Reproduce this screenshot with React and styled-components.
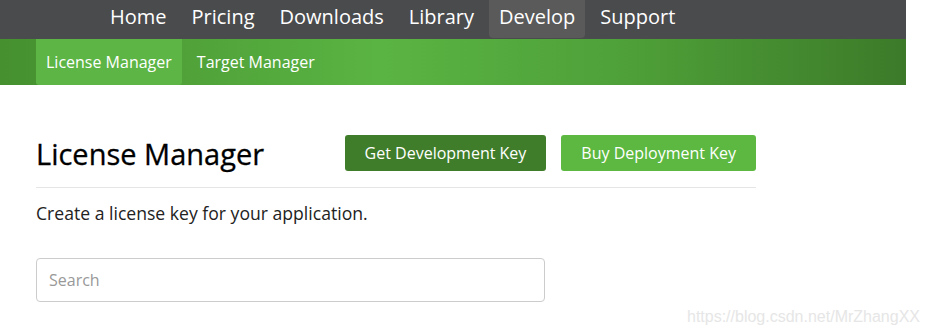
import React from "react";
import styled, { createGlobalStyle } from "styled-components";

const Global = createGlobalStyle`
  html, body { margin: 0; padding: 0; background: #fff; }
  body { font-family: "Open Sans", "Noto Sans", sans-serif; color: #111; }
  * { box-sizing: border-box; }
`;

const Page = styled.div`
  width: 930px;
  height: 332px;
  position: relative;
  overflow: hidden;
`;

const TopBar = styled.nav`
  width: 906px;
  height: 39px;
  background: #4a4b4d;
  display: flex;
  align-items: stretch;
  gap: 5px;
  padding-left: 100px;
`;

const TopItem = styled.a`
  display: flex;
  align-items: center;
  padding: 0 10px 6px;
  height: 38px;
  font-size: 20px;
  color: #fff;
  text-decoration: none;
  border-radius: 0 0 4px 4px;
  background: ${(p) => (p.$active ? "#5a5a5a" : "transparent")};
`;

const SubBar = styled.nav`
  width: 906px;
  height: 46px;
  background: linear-gradient(to right, #46902f 0%, #5ab443 42%, #4e9f38 70%, #3c7a29 100%);
  display: flex;
  align-items: stretch;
  gap: 5px;
  padding-left: 36px;
`;

const SubItem = styled.a`
  display: flex;
  align-items: center;
  padding: 0 10px 0;
  font-size: 16px;
  color: #fff;
  text-decoration: none;
  border-radius: 0 0 3px 3px;
  background: ${(p) => (p.$active ? "#5cb544" : "transparent")};
`;

const Content = styled.main`
  width: 720px;
  margin-left: 36px;
  padding-top: 48px;
`;

const HeaderRow = styled.div`
  display: flex;
  justify-content: space-between;
  align-items: center;
  padding-bottom: 14px;
  border-bottom: 1px solid #e5e5e5;
`;

const Title = styled.h1`
  margin: 0;
  font-size: 29px;
  font-weight: 400;
  color: #000;
  line-height: 38px;
  padding-top: 2px;
  -webkit-text-stroke: 0.3px #000;
`;

const ButtonGroup = styled.div`
  display: flex;
  gap: 15px;
`;

const Button = styled.button`
  height: 36px;
  padding: 0 20px;
  border: none;
  border-radius: 3px;
  font-family: "Open Sans", "Noto Sans", sans-serif;
  font-size: 16px;
  color: #fff;
  background: ${(p) => (p.$variant === "dark" ? "#3f7d2a" : "#5cb840")};
  cursor: pointer;
`;

const Lead = styled.p`
  margin: 12px 0 0;
  font-size: 17.6px;
  color: #222;
  line-height: 26px;
`;

const SearchInput = styled.input`
  display: block;
  margin-top: 32px;
  width: 509px;
  height: 44px;
  padding: 0 12px;
  border: 1px solid #ccc;
  border-radius: 4px;
  font-family: "Open Sans", "Noto Sans", sans-serif;
  font-size: 16px;
  color: #333;
  &::placeholder { color: #999; }
`;

const Watermark = styled.div`
  position: absolute;
  right: 10px;
  bottom: 6px;
  font-family: "Liberation Sans", Arial, sans-serif;
  font-size: 16px;
  color: #e6e6e6;
`;

export default function App() {
  const top = ["Home", "Pricing", "Downloads", "Library", "Develop", "Support"];
  return (
    <>
      <Global />
      <Page>
        <TopBar>
          {top.map((t) => (
            <TopItem key={t} $active={t === "Develop"}>{t}</TopItem>
          ))}
        </TopBar>
        <SubBar>
          <SubItem $active>License Manager</SubItem>
          <SubItem>Target Manager</SubItem>
        </SubBar>
        <Content>
          <HeaderRow>
            <Title>License Manager</Title>
            <ButtonGroup>
              <Button $variant="dark">Get Development Key</Button>
              <Button $variant="light">Buy Deployment Key</Button>
            </ButtonGroup>
          </HeaderRow>
          <Lead>Create a license key for your application.</Lead>
          <SearchInput placeholder="Search" />
        </Content>
        <Watermark>https://blog.csdn.net/MrZhangXX</Watermark>
      </Page>
    </>
  );
}
